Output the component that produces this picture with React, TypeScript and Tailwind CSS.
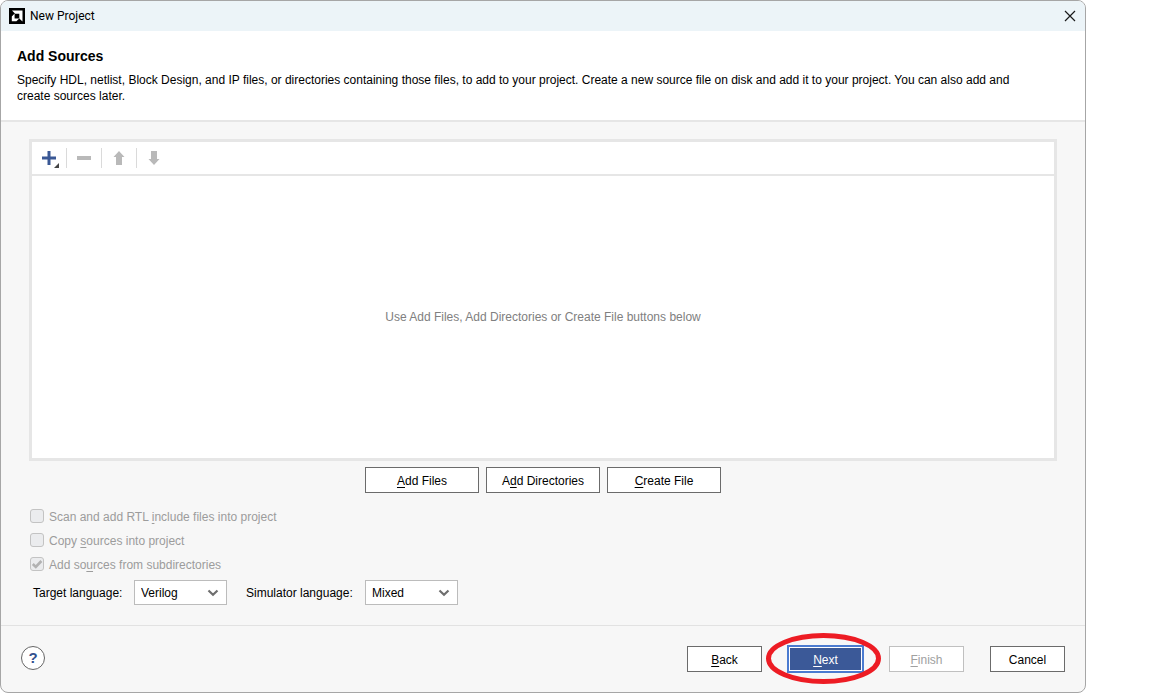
import { useState } from "react";
import type { ReactNode } from "react";

const Key = ({ children }: { children: ReactNode }) => (
  <span className="underline underline-offset-2">{children}</span>
);

const ToolButton = ({ label, disabled, children }: { label: string; disabled?: boolean; children: ReactNode }) => (
  <button aria-label={label} disabled={disabled} className="flex h-8 w-[34px] items-center justify-center">
    {children}
  </button>
);

const Separator = () => <div className="h-5 w-px bg-[#dadada]" />;

const SourceButton = ({ children }: { children: ReactNode }) => (
  <button className="h-[26px] w-[114px] border border-[#6b6b6b] bg-white pt-[2px] text-center">{children}</button>
);

const CheckOption = ({ checked, children }: { checked?: boolean; children: ReactNode }) => (
  <label className="flex h-6 items-center gap-[5px] text-[#9c9c9c]">
    <span className="relative flex h-[14px] w-[14px]">
      <input
        type="checkbox"
        disabled
        defaultChecked={checked}
        className="h-[14px] w-[14px] appearance-none rounded-[3px] border border-[#c3c3c3] bg-[#ebecee]"
      />
      {checked && (
        <svg className="absolute inset-0" width="14" height="14" viewBox="0 0 14 14" fill="none" stroke="#b2b2b2" strokeWidth="2.6">
          <path d="M2.8 7l3 3L11.4 4" />
        </svg>
      )}
    </span>
    <span className="pt-[2px]">{children}</span>
  </label>
);

const LanguageSelect = ({ id, options }: { id: string; options: string[] }) => {
  const [value, setValue] = useState(options[0]);
  return (
    <div className="relative">
      <select
        id={id}
        value={value}
        onChange={(e) => setValue(e.target.value)}
        className="block h-[25px] w-[93px] appearance-none rounded-none border border-[#bcbcbc] bg-white pl-[6px]"
      >
        {options.map((option) => (
          <option key={option}>{option}</option>
        ))}
      </select>
      <svg className="pointer-events-none absolute top-[9px] right-2" width="12" height="8" viewBox="0 0 12 8" fill="none" stroke="#6e6e6e" strokeWidth="2.2">
        <path d="M1.5 1.5L6 5.7l4.5-4.2" />
      </svg>
    </div>
  );
};

const TitleBar = () => (
  <header className="flex h-[30px] items-center justify-between bg-[#ecf4f8] pr-[9px] pl-2">
    <div className="flex items-center gap-[5px]">
      <svg width="16" height="16" viewBox="0 0 16 16">
        <path d="M0 0h16v16H0z" fill="#000" />
        <path d="M3 2.5h10.5V13.5L10.3 10.4V5.7H6.2z" fill="#fff" />
        <path d="M5.6 5.6v4.8h4.6L7.4 13.2H2.8V8.4z" fill="#fff" />
      </svg>
      <h1 className="font-[Roboto,sans-serif] text-[12px]">New Project</h1>
    </div>
    <button aria-label="Close">
      <svg width="12" height="12" viewBox="0 0 12 12" stroke="#1a1a1a" strokeWidth="1.2">
        <path d="M1 1l10 10M11 1L1 11" />
      </svg>
    </button>
  </header>
);

const SourceList = () => (
  <section className="flex flex-1 flex-col border-[3px] border-[#e6e6e6] bg-white">
    <div className="flex h-[34px] items-center border-b-2 border-[#e6e6e6]">
      <ToolButton label="Add">
        <svg width="20" height="20" viewBox="0 0 20 20">
          <path d="M8.5 3h3v5.5H17v3h-5.5V17h-3v-5.5H3v-3h5.5z" fill="#3a5895" />
          <path d="M20 15v5h-5z" fill="#444" />
        </svg>
      </ToolButton>
      <Separator />
      <ToolButton label="Remove" disabled>
        <svg width="14" height="4" viewBox="0 0 14 4">
          <path d="M0 0h14v4H0z" fill="#b9b9b9" />
        </svg>
      </ToolButton>
      <Separator />
      <ToolButton label="Move up" disabled>
        <svg width="12" height="14" viewBox="0 0 12 14">
          <path d="M6 0l5.5 6H9v8H3V6H.5z" fill="#b9b9b9" />
        </svg>
      </ToolButton>
      <Separator />
      <ToolButton label="Move down" disabled>
        <svg width="12" height="14" viewBox="0 0 12 14">
          <path d="M6 14L.5 8H3V0h6v8h2.5z" fill="#b9b9b9" />
        </svg>
      </ToolButton>
    </div>
    <div className="flex flex-1 items-center justify-center text-[#808080]">
      Use Add Files, Add Directories or Create File buttons below
    </div>
  </section>
);

const Footer = () => (
  <footer className="flex h-[67px] items-center justify-between border-t border-[#e2e2e2] px-5">
    <button
      aria-label="Help"
      className="mb-[2px] flex h-6 w-6 items-center justify-center rounded-full border border-[#666] bg-white text-[15px] font-bold text-[#34518f]"
    >
      ?
    </button>
    <div className="flex items-center">
      <button className="h-[26px] w-[75px] border border-[#6b6b6b] bg-white pt-[2px]">
        <Key>B</Key>ack
      </button>
      <div className="relative mr-[25px] ml-[25px]">
        <button className="block h-7 w-[77px] border-2 border-[#4b7bd0] bg-[#3b5998] pt-[2px] text-white ring-1 ring-white ring-inset">
          <Key>N</Key>ext
        </button>
        <svg className="pointer-events-none absolute top-[-12px] left-[-21px]" width="116" height="52" viewBox="0 0 116 52">
          <ellipse cx="57.5" cy="25.5" rx="55" ry="23" fill="none" stroke="#ed1c24" strokeWidth="5" />
        </svg>
      </div>
      <button disabled className="mr-[26px] h-[26px] w-[75px] border border-[#c0c0c0] bg-white pt-[2px] text-[#a0a0a0]">
        <Key>F</Key>inish
      </button>
      <button className="h-[26px] w-[75px] border border-[#6b6b6b] bg-white pt-[2px]">Cancel</button>
    </div>
  </footer>
);

export default function App() {
  return (
    <div className="flex min-h-screen bg-white pr-[66px] font-['Liberation_Sans',Arial,sans-serif] text-[12px] leading-4 text-black">
      <main className="flex flex-1 flex-col overflow-hidden rounded-lg border border-[#a6a6a6] bg-[#f7f7f7]">
        <TitleBar />
        <div className="h-[91px] border-b-2 border-[#e6e6e6] bg-white pt-[17px] pr-10 pl-4">
          <h2 className="mb-2 text-[14px] leading-4 font-bold">Add Sources</h2>
          <p>
            Specify HDL, netlist, Block Design, and IP files, or directories containing those files, to add to your
            project. Create a new source file on disk and add it to your project. You can also add and
            <br />
            create sources later.
          </p>
        </div>
        <div className="flex flex-1 flex-col px-7 pt-[17px] pb-5">
          <SourceList />
          <div className="mt-[6px] flex justify-center gap-[7px]">
            <SourceButton><Key>A</Key>dd Files</SourceButton>
            <SourceButton>A<Key>d</Key>d Directories</SourceButton>
            <SourceButton><Key>C</Key>reate File</SourceButton>
          </div>
          <div className="mt-[11px] flex flex-col pl-px">
            <CheckOption>Scan and add RTL <Key>i</Key>nclude files into project</CheckOption>
            <CheckOption>Copy <Key>s</Key>ources into project</CheckOption>
            <CheckOption checked>Add so<Key>u</Key>rces from subdirectories</CheckOption>
          </div>
          <div className="mt-1 flex items-center pl-1">
            <label htmlFor="target" className="w-[101px]">Target language:</label>
            <LanguageSelect id="target" options={["Verilog", "VHDL"]} />
            <label htmlFor="simulator" className="ml-[19px] w-[119px]">Simulator language:</label>
            <LanguageSelect id="simulator" options={["Mixed", "Verilog", "VHDL"]} />
          </div>
        </div>
        <Footer />
      </main>
    </div>
  );
}
